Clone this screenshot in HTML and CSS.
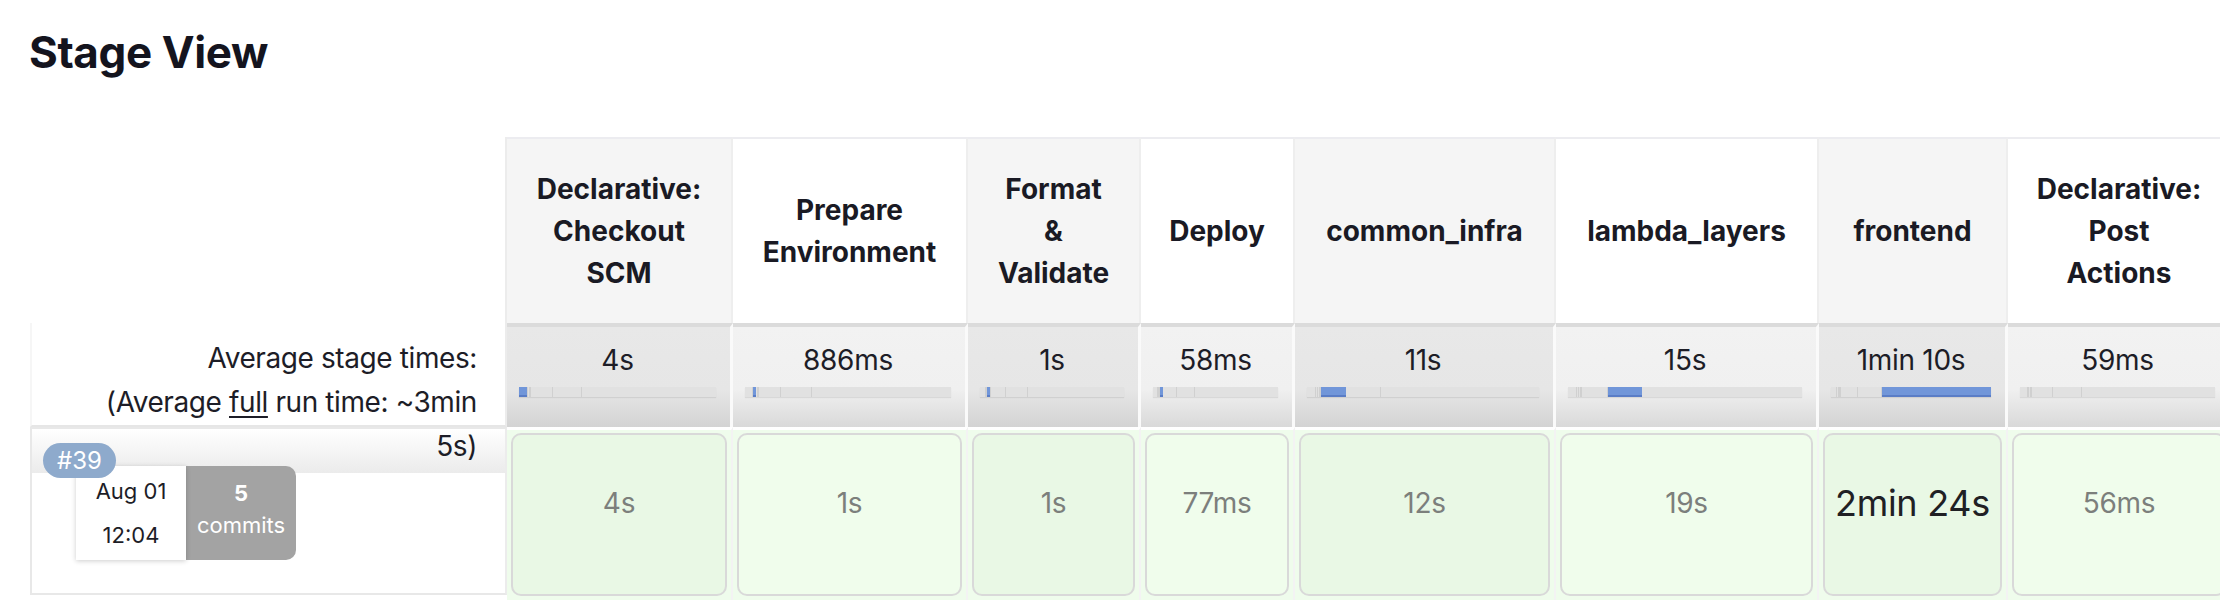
FILE: index.html
```html
<!DOCTYPE html>
<html lang="en">
<head>
<meta charset="utf-8">
<title>Stage View</title>
<link rel="stylesheet" href="styles.css">
</head>
<body>
<h2 class="title">Stage View</h2>
<div class="stage-wrap">
  <div class="stage-grid">
    <!-- header row -->
    <div class="corner"></div>
    <div class="head odd">Declarative:<br>Checkout<br>SCM</div>
    <div class="head even">Prepare<br>Environment</div>
    <div class="head odd">Format<br>&amp;<br>Validate</div>
    <div class="head even">Deploy</div>
    <div class="head odd">common_infra</div>
    <div class="head even">lambda_layers</div>
    <div class="head odd">frontend</div>
    <div class="head even">Declarative:<br>Post<br>Actions</div>

    <!-- average row -->
    <div class="avg-label">Average stage times:<br>(Average <u>full</u> run time: ~3min<br>5s)</div>
    <div class="avg odd"><div class="avg-val">4s</div>
      <div class="bar"><i class="on" style="width:3.92%"></i><i style="width:0.87%"></i><i style="width:0.98%"></i><i style="width:0.06%"></i><i style="width:10.78%"></i><i style="width:14.71%"></i><i style="width:68.63%"></i><i style="width:0.05%"></i></div></div>
    <div class="avg even"><div class="avg-val">886ms</div>
      <div class="bar"><i style="width:3.92%"></i><i class="on" style="width:0.87%"></i><i style="width:0.98%"></i><i style="width:0.06%"></i><i style="width:10.78%"></i><i style="width:14.71%"></i><i style="width:68.63%"></i><i style="width:0.05%"></i></div></div>
    <div class="avg odd"><div class="avg-val">1s</div>
      <div class="bar"><i style="width:3.92%"></i><i style="width:0.87%"></i><i class="on" style="width:0.98%"></i><i style="width:0.06%"></i><i style="width:10.78%"></i><i style="width:14.71%"></i><i style="width:68.63%"></i><i style="width:0.05%"></i></div></div>
    <div class="avg even"><div class="avg-val">58ms</div>
      <div class="bar"><i style="width:3.92%"></i><i style="width:0.87%"></i><i style="width:0.98%"></i><i class="on" style="width:0.06%"></i><i style="width:10.78%"></i><i style="width:14.71%"></i><i style="width:68.63%"></i><i style="width:0.05%"></i></div></div>
    <div class="avg odd"><div class="avg-val">11s</div>
      <div class="bar"><i style="width:3.92%"></i><i style="width:0.87%"></i><i style="width:0.98%"></i><i style="width:0.06%"></i><i class="on" style="width:10.78%"></i><i style="width:14.71%"></i><i style="width:68.63%"></i><i style="width:0.05%"></i></div></div>
    <div class="avg even"><div class="avg-val">15s</div>
      <div class="bar"><i style="width:3.92%"></i><i style="width:0.87%"></i><i style="width:0.98%"></i><i style="width:0.06%"></i><i style="width:10.78%"></i><i class="on" style="width:14.71%"></i><i style="width:68.63%"></i><i style="width:0.05%"></i></div></div>
    <div class="avg odd"><div class="avg-val">1min 10s</div>
      <div class="bar"><i style="width:3.92%"></i><i style="width:0.87%"></i><i style="width:0.98%"></i><i style="width:0.06%"></i><i style="width:10.78%"></i><i style="width:14.71%"></i><i class="on" style="width:68.63%"></i><i style="width:0.05%"></i></div></div>
    <div class="avg even"><div class="avg-val">59ms</div>
      <div class="bar"><i style="width:3.92%"></i><i style="width:0.87%"></i><i style="width:0.98%"></i><i style="width:0.06%"></i><i style="width:10.78%"></i><i style="width:14.71%"></i><i style="width:68.63%"></i><i class="on" style="width:0.05%"></i></div></div>

    <!-- build row -->
    <div class="build-left">
      <span class="badge">#39</span>
      <div class="build-meta">
        <div class="date"><div>Aug 01</div><div>12:04</div></div>
        <div class="commits"><div class="num">5</div><div>commits</div></div>
      </div>
    </div>
    <div class="build odd"><div class="box">4s</div></div>
    <div class="build even"><div class="box">1s</div></div>
    <div class="build odd"><div class="box">1s</div></div>
    <div class="build even"><div class="box">77ms</div></div>
    <div class="build odd"><div class="box">12s</div></div>
    <div class="build even"><div class="box">19s</div></div>
    <div class="build odd"><div class="box long">2min 24s</div></div>
    <div class="build even"><div class="box">56ms</div></div>
  </div>
</div>
</body>
</html>
```
FILE: styles.css
```css
* { box-sizing: border-box; }

html, body {
  margin: 0;
  padding: 0;
  background: #fff;
  overflow: hidden;
}

body {
  font-family: Inter, "Noto Sans", sans-serif;
  color: #1d1d27;
}

.title {
  margin: 0;
  height: 137px;
  padding: 26px 0 0 29px;
  font-size: 44px;
  line-height: 53px;
  font-weight: 700;
  letter-spacing: -0.4px;
  color: #14141e;
}

.stage-wrap {
  padding-left: 30px;
  overflow: hidden;
}

.stage-grid {
  display: grid;
  grid-template-columns: 477px 226px 235px 173px 154px 261px 263px 189px 224px;
  grid-template-rows: 186px 104px 173px;
  width: max-content;
}

/* header row */
.corner {
  border-right: 2px solid #ececec;
}

.head {
  display: flex;
  align-items: center;
  justify-content: center;
  text-align: center;
  font-size: 28px;
  line-height: 42px;
  font-weight: 700;
  color: #1a1a24;
  border-top: 2px solid #ececf0;
  border-right: 2px solid #eeeeee;
  padding: 0 8px;
}
.head.odd { background: #f5f5f5; }
.head.even { background: #ffffff; }

/* average row */
.avg-label {
  position: relative;
  z-index: 2;
  text-align: right;
  font-size: 28px;
  line-height: 44px;
  letter-spacing: -0.4px;
  padding: 13px 28px 0 0;
  border-left: 2px solid #f6f6f6;
  border-right: 2px solid #ececec;
  border-bottom: 2px solid #e6e6e6;
  color: #1d1d27;
}
.avg-label u { text-decoration-thickness: 2px; text-underline-offset: 4px; }

.avg {
  border-top: 4px solid #dbdbdb;
  border-right: 3px solid #fafafa;
  padding: 13px 14px 0 12px;
}
.avg.odd { background: linear-gradient(to bottom, #e8e8e8 0%, #e6e6e6 62%, #d3d3d3 100%); }
.avg.even { background: linear-gradient(to bottom, #f2f2f2 0%, #f0f0f0 62%, #d9d9d9 100%); }

.avg-val {
  text-align: center;
  font-size: 28px;
  line-height: 40px;
  letter-spacing: -0.3px;
  color: #1d1d27;
}

.bar {
  display: flex;
  height: 10px;
  margin-top: 7px;
  background: #dedede;
  box-shadow: 0 1px 1px rgba(0,0,0,0.08);
  overflow: hidden;
}
.bar i {
  display: block;
  flex: none;
  height: 100%;
  background: #e1e1e1;
  border-right: 1px solid #d0d0d0;
}
.bar i:last-child { border-right: 0; }
.bar i.on {
  min-width: 3px;
  background: #7196d9;
  border-right: 0;
  box-shadow: inset 0 -2px 0 #5a7dc6;
}

/* build row */
.build-left {
  position: relative;
  align-self: start;
  height: 168px;
  border: 2px solid #e8e8e8;
  border-right-color: #ececec;
  background: linear-gradient(to bottom, #ffffff, #ebebeb) 0 0 / 100% 44px no-repeat, #ffffff;
}

.badge {
  position: absolute;
  left: 11px;
  top: 14px;
  z-index: 3;
  height: 35px;
  padding: 0 14px;
  border-radius: 18px;
  background: #8eaacc;
  color: #fff;
  font-size: 24px;
  line-height: 35px;
}

.build-meta {
  display: flex;
  padding: 37px 0 0 44px;
}

.date {
  width: 110px;
  height: 94px;
  background: #fff;
  box-shadow: 0 1px 5px rgba(0,0,0,0.2);
  text-align: center;
  font-size: 22px;
  line-height: 44px;
  padding-top: 3px;
  color: #1d1d27;
  position: relative;
  z-index: 1;
}

.commits {
  width: 110px;
  height: 94px;
  background: #a3a3a3;
  border-radius: 0 10px 10px 0;
  color: #fff;
  text-align: center;
  font-size: 22px;
  line-height: 32px;
  padding-top: 11px;
}
.commits .num { font-weight: 700; }

.build {
  border-top: 3px solid #ffffff;
  border-right: 2px solid #f3f3f3;
  padding: 3px 4px 0 4px;
  background: #effcec;
}

.box {
  height: 163px;
  border: 2px solid #d9d9d9;
  border-radius: 10px;
  text-align: center;
  padding-top: 48px;
  font-size: 28px;
  line-height: 40px;
  letter-spacing: -0.3px;
  color: #7c7f7c;
}
.build.odd .box { background: #e9f8e5; }
.build.even .box { background: #f0fdec; }

.box.long {
  font-size: 36px;
  color: #202024;
}
```
